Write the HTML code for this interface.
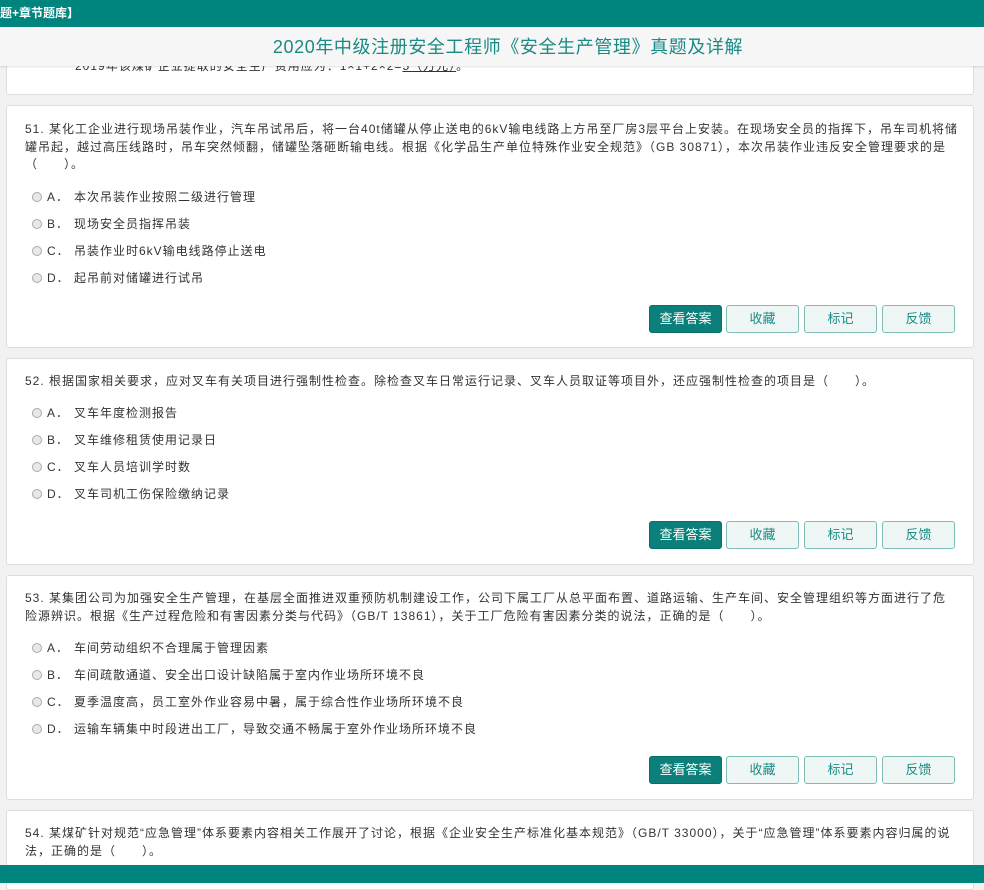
<!DOCTYPE html>
<html><head><meta charset="utf-8">
<style>
*{margin:0;padding:0;box-sizing:border-box}
body{width:984px;height:883px;overflow:hidden;background:#f2f2f2;position:relative;font-family:"Liberation Sans","Noto Sans CJK SC",sans-serif;font-size:12px;color:#333}
.top{position:absolute;left:0;top:0;width:984px;height:27px;background:#00857e;color:#fff;font-size:12px;font-weight:bold;line-height:27px;z-index:5}
.title{position:absolute;left:0;top:27px;width:984px;height:39px;background:#f6f6f6;color:#1a8a84;font-size:18px;letter-spacing:0.6px;line-height:40px;text-align:center;padding-left:32px;z-index:5;box-shadow:0 1px 2px rgba(0,0,0,.12)}
.card{position:absolute;left:6px;width:968px;background:#fff;border:1px solid #ddd;border-radius:3px}
.q{position:absolute;left:18px;line-height:17.5px;font-size:12px;color:#333;white-space:nowrap;letter-spacing:1px}
.opt{position:absolute;left:25px;font-size:12px;color:#333;height:16px;line-height:16px;white-space:nowrap;letter-spacing:1px}
.opt i{display:inline-block;width:10px;height:10px;border-radius:50%;border:1px solid #aaa;background:#e8e8e8;vertical-align:-1px;margin-right:5px}
.opt b{font-weight:normal;display:inline-block;width:27px}
.btn{position:absolute;width:73px;height:28px;border:1px solid #7fbcb8;border-radius:3px;background:#eef7f6;color:#1a8a84;text-align:center;line-height:26px;font-size:13px}
.btn.p{background:#0b7f79;color:#fff;border-color:#0b6f69}
.bot{position:absolute;left:0;top:865px;width:984px;height:18px;background:#00857e}
</style></head><body>
<div class="top">题+章节题库】</div>
<div class="title">2020年中级注册安全工程师《安全生产管理》真题及详解</div>

<div class="card" style="top:40px;height:55px">
<div class="q" style="top:17px;left:68px">2019年该煤矿企业提取的安全生产费用应为：1×1+2×2=<u>5（万元）</u>。</div>
</div>

<div class="card" style="top:105px;height:243px">
<div class="q" style="top:15px">51. 某化工企业进行现场吊装作业，汽车吊试吊后，将一台40t储罐从停止送电的6kV输电线路上方吊至厂房3层平台上安装。在现场安全员的指挥下，吊车司机将储<br>罐吊起，越过高压线路时，吊车突然倾翻，储罐坠落砸断输电线。根据《化学品生产单位特殊作业安全规范》（GB 30871），本次吊装作业违反安全管理要求的是<br>（　　）。</div>
<div class="opt" style="top:83px"><i></i><b>A．</b>本次吊装作业按照二级进行管理</div>
<div class="opt" style="top:110px"><i></i><b>B．</b>现场安全员指挥吊装</div>
<div class="opt" style="top:137px"><i></i><b>C．</b>吊装作业时6kV输电线路停止送电</div>
<div class="opt" style="top:164px"><i></i><b>D．</b>起吊前对储罐进行试吊</div>
<div class="btn p" style="left:642px;top:199px">查看答案</div>
<div class="btn" style="left:719px;top:199px">收藏</div>
<div class="btn" style="left:797px;top:199px">标记</div>
<div class="btn" style="left:875px;top:199px">反馈</div>
</div>

<div class="card" style="top:358px;height:207px">
<div class="q" style="top:14px">52. 根据国家相关要求，应对叉车有关项目进行强制性检查。除检查叉车日常运行记录、叉车人员取证等项目外，还应强制性检查的项目是（　　）。</div>
<div class="opt" style="top:46px"><i></i><b>A．</b>叉车年度检测报告</div>
<div class="opt" style="top:73px"><i></i><b>B．</b>叉车维修租赁使用记录日</div>
<div class="opt" style="top:100px"><i></i><b>C．</b>叉车人员培训学时数</div>
<div class="opt" style="top:127px"><i></i><b>D．</b>叉车司机工伤保险缴纳记录</div>
<div class="btn p" style="left:642px;top:162px">查看答案</div>
<div class="btn" style="left:719px;top:162px">收藏</div>
<div class="btn" style="left:797px;top:162px">标记</div>
<div class="btn" style="left:875px;top:162px">反馈</div>
</div>

<div class="card" style="top:575px;height:225px">
<div class="q" style="top:14px">53. 某集团公司为加强安全生产管理，在基层全面推进双重预防机制建设工作，公司下属工厂从总平面布置、道路运输、生产车间、安全管理组织等方面进行了危<br>险源辨识。根据《生产过程危险和有害因素分类与代码》（GB/T 13861），关于工厂危险有害因素分类的说法，正确的是（　　）。</div>
<div class="opt" style="top:64px"><i></i><b>A．</b>车间劳动组织不合理属于管理因素</div>
<div class="opt" style="top:91px"><i></i><b>B．</b>车间疏散通道、安全出口设计缺陷属于室内作业场所环境不良</div>
<div class="opt" style="top:118px"><i></i><b>C．</b>夏季温度高，员工室外作业容易中暑，属于综合性作业场所环境不良</div>
<div class="opt" style="top:145px"><i></i><b>D．</b>运输车辆集中时段进出工厂，导致交通不畅属于室外作业场所环境不良</div>
<div class="btn p" style="left:642px;top:180px">查看答案</div>
<div class="btn" style="left:719px;top:180px">收藏</div>
<div class="btn" style="left:797px;top:180px">标记</div>
<div class="btn" style="left:875px;top:180px">反馈</div>
</div>

<div class="card" style="top:810px;height:80px">
<div class="q" style="top:14px">54. 某煤矿针对规范“应急管理”体系要素内容相关工作展开了讨论，根据《企业安全生产标准化基本规范》（GB/T 33000），关于“应急管理”体系要素内容归属的说<br>法，正确的是（　　）。</div>
</div>
<div class="bot"></div>
</body></html>
